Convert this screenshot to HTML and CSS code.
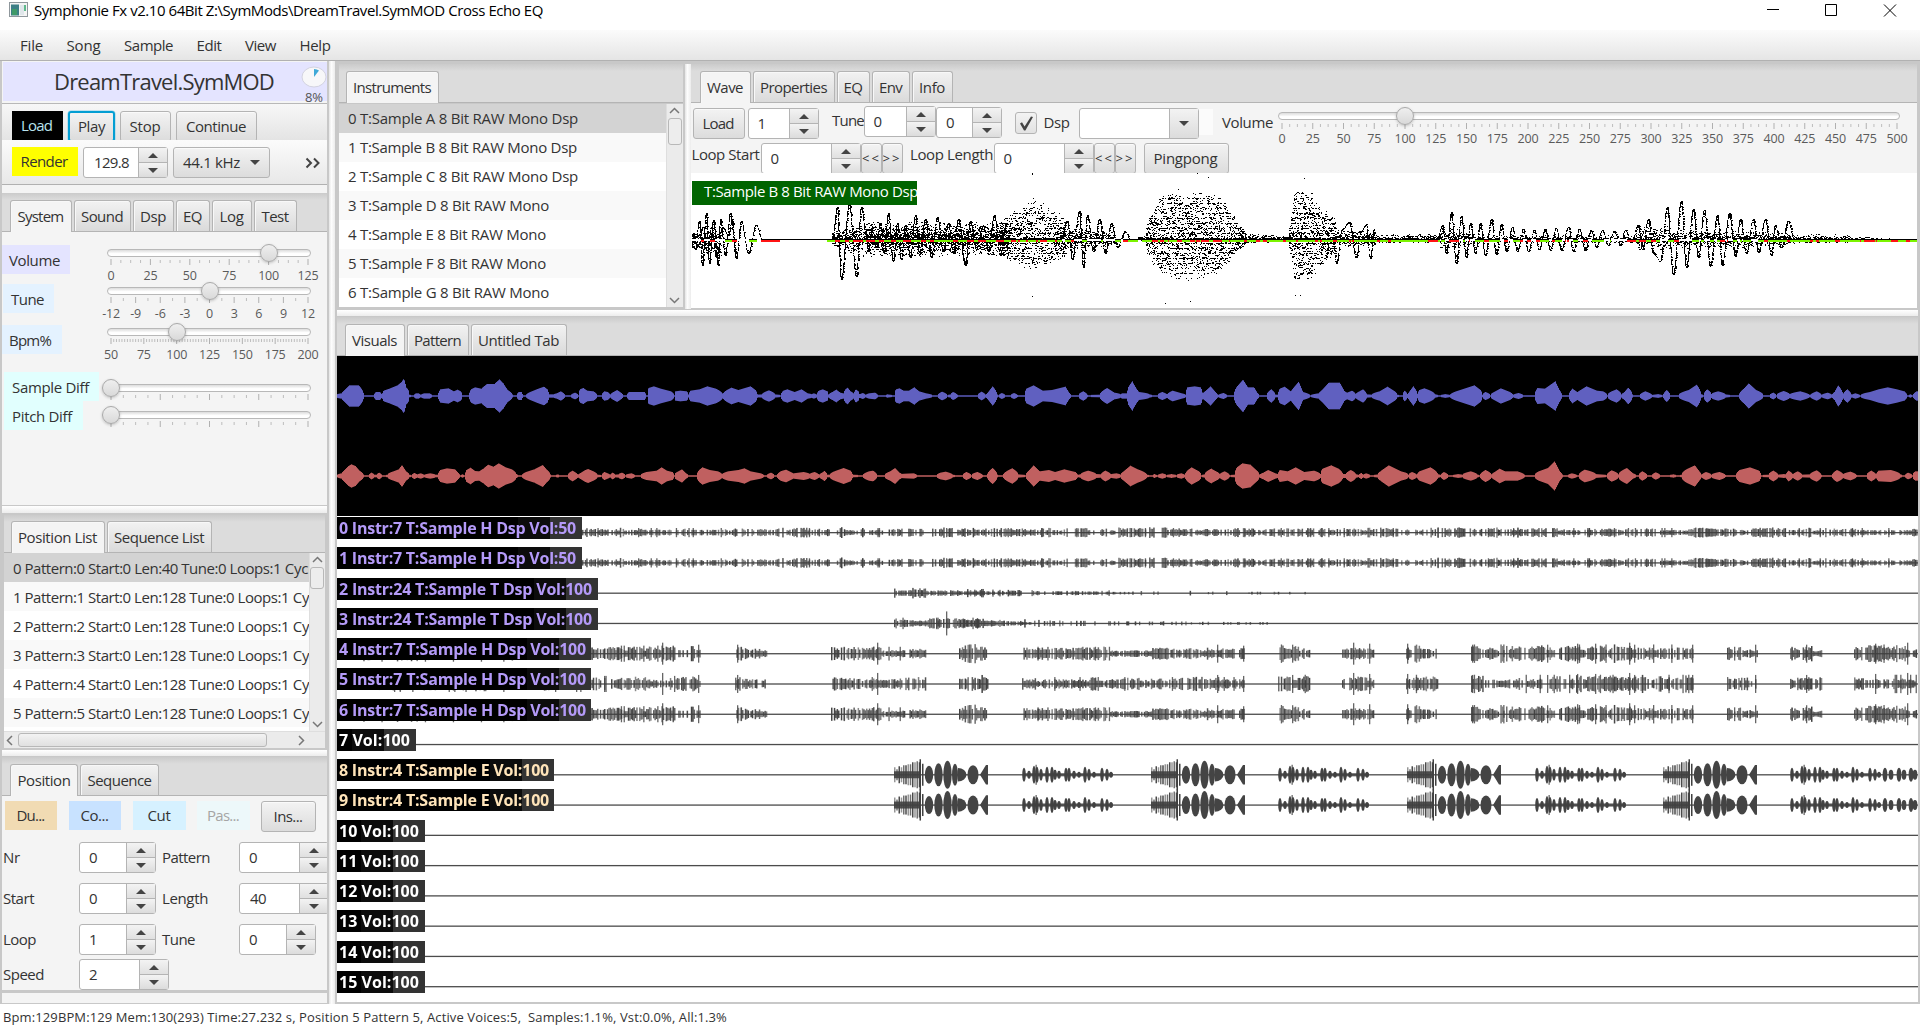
FILE: index.html
```html
<!DOCTYPE html>
<html lang="en">
<head>
<meta charset="utf-8">
<title>Symphonie Fx</title>
<link rel="stylesheet" href="styles.css">
</head>
<body>
<header class="titlebar">
  <svg class="app-icon" width="20" height="16" viewBox="0 0 20 16"><rect x=".5" y=".5" width="18" height="14" fill="#f4f4f4" stroke="#8f979c"/><rect x="2" y="2.500" width="8" height="11" fill="#3c7f86"/><rect x="3" y="7" width="5" height="6" fill="#3f9a68"/><rect x="11" y="3" width="4" height="10" fill="#dfe6ea"/><rect x="15" y="3" width="2" height="6" fill="#5fb98c"/></svg>
  <span data-w="509">Symphonie Fx v2.10 64Bit Z:\SymMods\DreamTravel.SymMOD Cross Echo EQ</span>
  <svg class="win-buttons" width="140" height="20" viewBox="0 0 140 20" fill="none" stroke="#000"><path d="M7 9.500h12M65.500 4.500h11v11h-11zM124 4.500l12 12M136 4.500l-12 12"/></svg>
</header>
<nav class="menubar">
  <span data-w="23">File</span><span data-w="34">Song</span><span data-w="49">Sample</span><span data-w="25">Edit</span><span data-w="31">View</span><span data-w="31">Help</span>
</nav>
<main class="work">
  <aside class="left">
    <div class="song"><div class="song-name"><span data-w="220">DreamTravel.SymMOD</span>
      <div class="load-meter"><svg width="26" height="22" viewBox="0 0 26 22"><ellipse cx="13" cy="11" rx="12" ry="10" fill="#f7f7f9" stroke="#d3d3e0"/><path d="M13 11V3q3 0 5 1.500z" fill="#3fa9d8"/></svg><span>8%</span></div></div></div>
    <div class="toolbar bar-top">
      <button class="btn black w51"><span data-w="31">Load</span></button><button class="btn focus w47"><span data-w="27">Play</span></button><button class="btn w51"><span data-w="31">Stop</span></button><button class="btn w81"><span data-w="60">Continue</span></button>
    </div>
    <div class="toolbar bar-bottom">
      <button class="btn yellow w66"><span data-w="47">Render</span></button>
      <div class="spinner w85"><b data-w="35">129.8</b><i></i></div>
      <button class="btn combo-btn"><span data-w="57">44.1 kHz</span><u class="down"></u></button>
      <svg class="more" width="16" height="12" viewBox="0 0 16 12" fill="none" stroke="#444" stroke-width="2"><path d="M1.500 1.500L6 6l-4.500 4.500M9 1.500L13.500 6 9 10.500"/></svg>
    </div>
    <div class="gap"></div>
    <section class="pane system">
      <div class="tabs"><div class="tab on w62"><span data-w="46">System</span></div><div class="tab w57"><span data-w="42">Sound</span></div><div class="tab w41"><span data-w="26">Dsp</span></div><div class="tab w34"><span data-w="19">EQ</span></div><div class="tab w40"><span data-w="24">Log</span></div><div class="tab w43"><span data-w="27">Test</span></div></div>
      <div class="params">
        <div class="param p1"><label class="lilac"><span data-w="51">Volume</span></label><div class="slider" data-labels="0,25,50,75,100,125" data-steps="20" data-value=".8"></div></div>
        <div class="param p2"><label class="sky"><span data-w="33">Tune</span></label><div class="slider" data-labels="-12,-9,-6,-3,0,3,6,9,12" data-steps="16" data-value=".5"></div></div>
        <div class="param p3"><label class="sky"><span data-w="42">Bpm%</span></label><div class="slider" data-labels="50,75,100,125,150,175,200" data-steps="72" data-value=".333"></div></div>
        <div class="param p4"><label class="aqua"><span data-w="77">Sample Diff</span></label><div class="slider" data-labels=",,,," data-steps="16" data-value="0"></div></div>
        <div class="param p5"><label class="aqua"><span data-w="60">Pitch Diff</span></label><div class="slider" data-labels=",,,," data-steps="16" data-value="0"></div></div>
      </div>
    </section>
    <div class="hsplit h10"></div>
    <section class="pane poslist">
      <div class="tabs"><div class="tab on w94"><span data-w="79">Position List</span></div><div class="tab w106"><span data-w="90">Sequence List</span></div></div>
      <div class="list-area">
        <div class="rows">
          <div class="sel"><span data-w="268">0 Pattern:0 Start:0 Len:40 Tune:0 Loops:1</span> Cycle</div>
          <div><span data-w="276">1 Pattern:1 Start:0 Len:128 Tune:0 Loops:1</span> Cycle</div>
          <div><span data-w="276">2 Pattern:2 Start:0 Len:128 Tune:0 Loops:1</span> Cycle</div>
          <div><span data-w="276">3 Pattern:3 Start:0 Len:128 Tune:0 Loops:1</span> Cycle</div>
          <div><span data-w="276">4 Pattern:4 Start:0 Len:128 Tune:0 Loops:1</span> Cycle</div>
          <div><span data-w="276">5 Pattern:5 Start:0 Len:128 Tune:0 Loops:1</span> Cycle</div>
          <div></div>
        </div>
        <div class="vscroll"><svg width="11" height="7" viewBox="0 0 11 7"><path d="M1 6l4.500-4.500L10 6"/></svg><em></em><svg width="11" height="7" viewBox="0 0 11 7"><path d="M1 1l4.500 4.500L10 1"/></svg></div>
      </div>
      <div class="hscroll"><svg width="7" height="11" viewBox="0 0 7 11"><path d="M6 1L1.500 5.500 6 10"/></svg><em></em><svg width="7" height="11" viewBox="0 0 7 11"><path d="M1 1l4.500 4.500L1 10"/></svg></div>
    </section>
    <div class="hsplit h7"></div>
    <section class="pane position">
      <div class="tabs"><div class="tab on w68"><span data-w="53">Position</span></div><div class="tab w79"><span data-w="64">Sequence</span></div></div>
      <div class="edit">
        <div class="edit-buttons"><button class="btn flat sand"><span data-w="28">Du...</span></button><button class="btn flat blue"><span data-w="28">Co...</span></button><button class="btn flat cyan"><span data-w="23">Cut</span></button><button class="btn flat pale"><span data-w="32">Pas...</span></button><button class="btn insert"><span data-w="29">Ins...</span></button></div>
        <div class="fields"><span><span data-w="17">Nr</span></span><div class="spinner w77"><b>0</b><i></i></div><span><span data-w="48">Pattern</span></span><div class="spinner w90"><b>0</b><i></i></div></div>
        <div class="fields"><span><span data-w="31">Start</span></span><div class="spinner w77"><b>0</b><i></i></div><span><span data-w="46">Length</span></span><div class="spinner w90"><b data-w="16">40</b><i></i></div></div>
        <div class="fields"><span><span data-w="33">Loop</span></span><div class="spinner w77"><b>1</b><i></i></div><span><span data-w="33">Tune</span></span><div class="spinner w77"><b>0</b><i></i></div></div>
        <div class="fields last"><span><span data-w="41">Speed</span></span><div class="spinner w90"><b>2</b><i></i></div></div>
      </div>
    </section>
    <div class="left-foot"></div>
  </aside>
  <div class="vsplit"></div>
  <div class="right">
    <div class="upper">
      <section class="pane instruments">
        <div class="tabs"><div class="tab on w93"><span data-w="78">Instruments</span></div></div>
        <div class="list-area">
          <div class="rows">
            <div class="sel"><span data-w="230">0 T:Sample A 8 Bit RAW Mono Dsp</span></div>
            <div><span data-w="229">1 T:Sample B 8 Bit RAW Mono Dsp</span></div>
            <div><span data-w="230">2 T:Sample C 8 Bit RAW Mono Dsp</span></div>
            <div><span data-w="201">3 T:Sample D 8 Bit RAW Mono</span></div>
            <div><span data-w="198">4 T:Sample E 8 Bit RAW Mono</span></div>
            <div><span data-w="198">5 T:Sample F 8 Bit RAW Mono</span></div>
            <div><span data-w="201">6 T:Sample G 8 Bit RAW Mono</span></div>
          </div>
          <div class="vscroll"><svg width="11" height="7" viewBox="0 0 11 7"><path d="M1 6l4.500-4.500L10 6"/></svg><em></em><svg width="11" height="7" viewBox="0 0 11 7"><path d="M1 1l4.500 4.500L10 1"/></svg></div>
        </div>
      </section>
      <div class="vsplit"></div>
      <section class="pane wave">
        <div class="tabs"><div class="tab on w51"><span data-w="36">Wave</span></div><div class="tab w82"><span data-w="67">Properties</span></div><div class="tab w33"><span data-w="19">EQ</span></div><div class="tab w38"><span data-w="23">Env</span></div><div class="tab w41"><span data-w="26">Info</span></div></div>
        <div class="wave-tools">
          <div class="tool-row one">
            <button class="btn w52"><span data-w="31">Load</span></button>
            <div class="spinner instr"><b>1</b><i></i></div>
            <span class="cap tune"><span data-w="32">Tune</span></span>
            <div class="spinner tune1"><b>0</b><i></i></div>
            <div class="spinner tune2"><b>0</b><i></i></div>
            <div class="check"><svg width="15" height="15" viewBox="0 0 15 15"><path d="M1 7.500l2-1.200 2.600 4.200L12 .5l2 .6-7.600 13.400H5z" fill="#444"/></svg></div>
            <span class="cap dsp"><span data-w="26">Dsp</span></span>
            <div class="combo"><i><u class="down"></u></i></div><div class="patch"></div>
            <span class="cap vol"><span data-w="51">Volume</span></span>
            <div class="slider wide" data-labels="0,25,50,75,100,125,150,175,200,225,250,275,300,325,350,375,400,425,450,475,500" data-steps="80" data-value=".2"></div>
          </div>
          <div class="tool-row two">
            <span class="cap start"><span data-w="68">Loop Start</span></span>
            <div class="spinner w100"><b>0</b><i></i></div>
            <button class="btn nudge">&lt;&lt;</button><button class="btn nudge">&gt;&gt;</button>
            <span class="cap len"><span data-w="83">Loop Length</span></span>
            <div class="spinner w100"><b>0</b><i></i></div>
            <button class="btn nudge">&lt;&lt;</button><button class="btn nudge">&gt;&gt;</button>
            <button class="btn pingpong"><span data-w="64">Pingpong</span></button>
          </div>
        </div>
        <div class="wave-view"><canvas id="sample" width="1226" height="135"></canvas><div class="wave-name"><span data-w="214">T:Sample B 8 Bit RAW Mono Dsp</span></div></div>
      </section>
    </div>
    <div class="hsplit h7 main-split"></div>
    <section class="pane visuals">
      <div class="tabs"><div class="tab on w60"><span data-w="45">Visuals</span></div><div class="tab w62"><span data-w="47">Pattern</span></div><div class="tab w96"><span data-w="81">Untitled Tab</span></div></div>
      <canvas id="scope" width="1581" height="160"></canvas>
      <div class="channels"><canvas id="tracks" width="1581" height="486"></canvas>
        <div class="names">
          <div class="dsp-ch n245"><span data-w="237">0 Instr:7 T:Sample H Dsp Vol:50</span></div>
          <div class="dsp-ch n245"><span data-w="237">1 Instr:7 T:Sample H Dsp Vol:50</span></div>
          <div class="dsp-ch n261"><span data-w="253">2 Instr:24 T:Sample T Dsp Vol:100</span></div>
          <div class="dsp-ch n261"><span data-w="253">3 Instr:24 T:Sample T Dsp Vol:100</span></div>
          <div class="dsp-ch n254"><span data-w="247">4 Instr:7 T:Sample H Dsp Vol:100</span></div>
          <div class="dsp-ch n254"><span data-w="247">5 Instr:7 T:Sample H Dsp Vol:100</span></div>
          <div class="dsp-ch n254"><span data-w="247">6 Instr:7 T:Sample H Dsp Vol:100</span></div>
          <div class="n79"><span data-w="71">7 Vol:100</span></div>
          <div class="dry-ch n217"><span data-w="210">8 Instr:4 T:Sample E Vol:100</span></div>
          <div class="dry-ch n217"><span data-w="210">9 Instr:4 T:Sample E Vol:100</span></div>
          <div class="n88"><span data-w="80">10 Vol:100</span></div>
          <div class="n88"><span data-w="80">11 Vol:100</span></div>
          <div class="n88"><span data-w="80">12 Vol:100</span></div>
          <div class="n88"><span data-w="80">13 Vol:100</span></div>
          <div class="n88"><span data-w="80">14 Vol:100</span></div>
          <div class="n88"><span data-w="80">15 Vol:100</span></div>
        </div>
      </div>
    </section>
  </div>
</main>
<footer class="status"><span data-w="724">Bpm:129BPM:129 Mem:130(293) Time:27.232 s, Position 5 Pattern 5, Active Voices:5,&nbsp; Samples:1.1%, Vst:0.0%, All:1.3%</span></footer>
<script src="app.js"></script>
</body>
</html>
```
FILE: styles.css
```css
* { box-sizing: border-box; }
body { margin: 0; width: 1920px; height: 1030px; overflow: hidden; display: flex; flex-direction: column; background: #fff; color: #333; font: 15px/20px "Open Sans", "Noto Sans", sans-serif; }
span, label, button, b { white-space: nowrap; }
[data-w] { display: inline-block; }
canvas { display: block; }

.titlebar { height: 30px; flex: none; display: flex; align-items: flex-start; padding-left: 9px; color: #000; }
.app-icon { margin: 2px 5px 0 0; }
.win-buttons { margin: 0 20px 0 auto; }
.menubar { height: 31px; flex: none; display: flex; align-items: center; gap: 23.500px; padding-left: 20px; border-bottom: 1px solid #b1b1b1; background: linear-gradient(#fbfbfb, #e5e5e5); }
.status { height: 26px; padding: 3px 0 0 3px; font-size: 13px; }

.work { height: 943px; display: flex; background: #c8c8c8; }
.left { width: 329px; flex: none; padding: 0 2px; overflow: hidden; }
.vsplit { width: 6px; flex: none; background: linear-gradient(90deg, #e4e4e4, #fdfdfd 40%, #ececec); }
.hsplit { background: linear-gradient(#fff, #ececec); border: solid #c8c8c8; }
.h10 { height: 10px; border-width: 1px 0 2px; }
.h7 { height: 7px; border-width: 0 0 1px; }
.gap { height: 8px; background: #f4f4f4; }

.song { height: 42px; padding: 1px 0 2px 1px; background: #f4f4f4; }
.song-name { height: 39px; position: relative; background: #e4e4ff; font-size: 22px; line-height: 38px; padding-left: 51px; }
.load-meter { position: absolute; right: 0; top: 4px; width: 26px; font-size: 13px; line-height: 16px; color: #555; text-align: center; }
.load-meter svg { display: block; }
.load-meter span { display: block; margin-top: 1px; }
.toolbar { display: flex; align-items: flex-start; padding: 7px 10px 0; gap: 5px; overflow: hidden; }
.bar-top { height: 37px; border-top: 1px solid #b8b8b8; background: linear-gradient(#f7f7f7, #e4e4e4); }
.bar-bottom { height: 45px; padding-right: 6px; border-bottom: 1px solid #b1b1b1; background: linear-gradient(#fbfbfb, #e8e8e8); }
.more { margin: 10px 0 0 auto; }

.btn { height: 31px; flex: none; padding: 0 1px 1px 0; border: 1px solid #b4b4b4; border-radius: 3px; background: linear-gradient(#f3f3f3, #dcdcdc); box-shadow: inset 0 1px #fafafa; color: #333; font: inherit; line-height: 20px; display: flex; justify-content: center; align-items: center; }
.btn.black, .btn.yellow, .btn.flat { border: 0; border-radius: 0; box-shadow: none; height: 29px; }
.btn.black { background: #000; color: #b9e3ee; padding-right: 2px; }
.btn.yellow { background: #ff0; padding-right: 2px; }
.btn.focus { border: 2px solid #039ed3; box-shadow: 0 0 0 .5px #8fd0e8; padding-right: 0; }
.combo-btn { width: 97px; justify-content: flex-start; padding-left: 9px; gap: 10px; }
.down { width: 0; height: 0; border: solid transparent; border-width: 5px 5px 0; border-top-color: #444; }

.spinner { height: 31px; flex: none; display: flex; border: 1px solid #b4b4b4; border-radius: 3px; background: #fff; }
.spinner b { flex: 1; font-weight: 400; line-height: 28px; padding-left: 9px; }
.spinner b[data-w] { padding-left: 10px; }
.spinner i { width: 29px; border-left: 1px solid #b4b4b4; position: relative; background: linear-gradient(#b4b4b4, #b4b4b4) 0 14px / 100% 1px no-repeat, linear-gradient(#f3f3f3, #e0e0e0 14px, #f3f3f3 15px, #dcdcdc); }
.spinner i::before, .spinner i::after { content: ""; position: absolute; left: 9px; border: solid transparent; }
.spinner i::before { top: 5px; border-width: 0 5px 5px; border-bottom-color: #444; }
.spinner i::after { top: 20px; border-width: 5px 5px 0; border-top-color: #444; }

.tabs { height: 39px; display: flex; align-items: flex-end; gap: 2px; padding-left: 7.500px; border-bottom: 1px solid #b4b4b4; background: linear-gradient(#cbcbcb, #dcdcdc 7px); }
.tab { height: 31px; flex: none; border: 1px solid #b4b4b4; border-bottom: 0; border-radius: 3px 3px 0 0; background: linear-gradient(#f2f2f2, #dadada); box-shadow: inset 1px 1px #f8f8f8; display: flex; justify-content: center; align-items: center; padding-bottom: 1px; }
.tab.on { height: 32px; margin-bottom: -1px; padding-bottom: 2px; background: #f4f4f4; }
.upper .tab { padding-bottom: 0; }
.upper .tab.on { padding-bottom: 1px; }
.poslist .tabs, .instruments .tabs, .wave .tabs { height: 38px; }
.upper .tabs { height: 39px; }
.wave .tabs { padding-left: 8.500px; }
.visuals .tabs { padding-left: 7.500px; }

.params { height: 273px; padding-top: 12px; background: #f4f4f4; }
.param { display: flex; align-items: flex-start; position: relative; }
.param label { height: 29px; margin-top: 1px; line-height: 30px; }
.param .slider { width: 204px; margin-left: auto; margin-right: 16px; }
.p1 { height: 39px; } .p1 label { width: 68px; padding-left: 7px; }
.p2 { height: 41px; } .p2 label { width: 51px; margin-left: 1px; padding-left: 8px; } .p2 .slider, .p3 .slider { margin-top: -1px; }
.p3 { height: 47px; } .p3 label { width: 60px; padding-left: 7px; }
.p4 { height: 29px; } .p4 label { width: 95px; margin-left: 2px; padding-left: 8px; } .p4 .slider { margin-top: 8px; }
.p5 { height: 30px; } .p5 label { width: 79px; margin-left: 2px; padding-left: 8px; } .p5 .slider { margin-top: 6px; }
.lilac { background: #e4e4ff; } .sky { background: #e4f2ff; } .aqua { background: #e1fffe; }

.slider { height: 36px; position: relative; padding-top: 5px; }
.slider .track { height: 8px; border: 1px solid #b8b8b8; border-radius: 4px; background: linear-gradient(#dcdcdc, #fff 60%); }
.slider .thumb { position: absolute; top: 0; width: 18px; height: 18px; margin-left: -9px; border: 1px solid #a9a9a9; border-radius: 50%; background: linear-gradient(#efefef, #d9d9d9); box-shadow: 0 1px 3px rgba(0, 0, 0, .22); }
.slider .rail { position: absolute; left: 4px; right: 3px; top: 0; }
.slider svg { display: block; width: 100%; height: 7px; margin-top: 2px; overflow: visible; }
.slider .ticks { padding: 0 3px 0 4px; }
.slider .nums { display: flex; justify-content: space-between; font-size: 12.500px; line-height: 16px; margin-top: 2px; letter-spacing: -.2px; color: #5a5a5a; }
.slider .nums span { width: 0; display: flex; justify-content: center; }

.list-area { display: flex; background: #fff; overflow: hidden; }
.rows { flex: 1; min-width: 0; overflow: hidden; }
.rows div { height: 29px; line-height: 30px; padding-left: 9px; white-space: nowrap; overflow: hidden; letter-spacing: -.2px; }
.rows div:nth-child(even) { background: #f9f9f9; }
.rows .sel { background: #d3d3d3; }
.instruments .rows div { line-height: 29px; }
.vscroll { width: 17px; background: #ebebeb; border-left: 1px solid #dedede; display: flex; flex-direction: column; align-items: center; padding: 3px 1px 3px 0; }
.vscroll svg:last-child { margin-top: auto; }
.vscroll svg, .hscroll svg { flex: none; fill: none; stroke: #777; stroke-width: 1.500; }
.vscroll em { width: 14px; height: 27px; margin-top: 4px; flex: none; border: 1px solid #b8b8b8; border-radius: 3px; background: #ededed; }
.poslist { padding: 0 2px 2px; height: 235px; }
.poslist .list-area { height: 178px; }
.poslist .vscroll em { height: 22px; }
.poslist .vscroll { width: 16px; }
.hscroll { height: 17px; border-top: 1px solid #dedede; background: #ebebeb; display: flex; align-items: center; padding: 0 20px 0 2px; }
.hscroll em { width: 249px; height: 14px; margin-left: 5px; border: 1px solid #b8b8b8; border-radius: 3px; background: linear-gradient(#f3f3f3, #e0e0e0); }
.hscroll svg:last-child { margin-left: auto; }

.position { height: 235px; overflow: hidden; }
.position .tabs { padding-left: 8px; }
.poslist .tabs { padding-left: 6.500px; }
.edit { height: 194px; overflow: hidden; background: #f4f4f4; padding: 5px 0 0 1px; }
.edit-buttons { display: flex; gap: 12px; padding-left: 2px; height: 41px; }
.flat { width: 53px; } .flat.sand { width: 52px; background: #f1dbb3; } .flat.blue { width: 52px; background: #c8e2ff; } .flat.cyan { background: #d6f1ff; } .flat.pale { background: #edf8fa; color: #a5a5a5; margin-left: -1px; }
.insert { width: 55px; margin-left: -1px; }
.fields { display: grid; grid-template-columns: 76px 83px 77px 90px; height: 41px; line-height: 30px; }
.fields.last { margin-top: -6px; }
.left-foot { height: 10px; margin-top: 1px; background: #f4f4f4; }

.right { flex: 1; min-width: 0; padding: 3px 2px 0; }
.upper { height: 245px; display: flex; }
.instruments { width: 348px; flex: none; padding: 0 2px; }
.instruments .tabs { margin-bottom: 1px; padding-left: 6.500px; }
.instruments .list-area { height: 203px; }
.main-split { margin-top: 1px; }
.wave { width: 1226px; flex: none; height: 244px; background: #f4f4f4; }
.wave-tools { height: 70px; }
.tool-row { display: flex; align-items: flex-start; }
.one { height: 40px; padding: 5px 0 0 1.500px; }
.one .instr { width: 71px; margin-left: 3px; }
.cap { flex: none; }
.cap.tune { margin: 2px 0 0 13.500px; width: 31.500px; }
.tune1 { width: 72px; margin-top: -2px; } .tune2 { width: 66px; margin: -1px 0 0 .5px; }
.check { width: 22px; height: 22px; margin: 4px 0 0 13px; flex: none; border: 1px solid #b4b4b4; border-radius: 3px; background: linear-gradient(#f3f3f3, #e2e2e2); display: flex; align-items: center; justify-content: center; }
.cap.dsp { margin: 4px 9.500px 0 6.500px; width: 26px; }
.combo { width: 120px; height: 31px; flex: none; border: 1px solid #b4b4b4; border-radius: 3px; background: #fff; display: flex; justify-content: flex-end; }
.combo i { width: 29px; border-left: 1px solid #b4b4b4; background: linear-gradient(#f3f3f3, #dcdcdc); display: flex; align-items: center; justify-content: center; }
.patch { width: 14px; height: 26px; margin-top: 1px; background: #fbfbfb; }
.cap.vol { margin: 4px 4px 0 9px; width: 52px; }
.wide { width: 622px; margin-top: -1px; flex: none; }
.wide svg { margin-top: 3px; }
.wide .nums { margin-top: 1px; }
.two { height: 30px; padding-left: .5px; }
.cap.start { width: 69px; } .cap.len { width: 83.500px; margin-left: 8px; }
.two .btn, .two .spinner { margin-top: -1px; }
.two .cap { margin-top: 1px; }
.nudge { width: 21px; padding-left: 1px; margin-right: -.5px; font-size: 13px; letter-spacing: 2px; overflow: hidden; }
.two .nudge, .two .spinner, .two .pingpong { margin-top: 0; }
.two .spinner { margin-right: .5px; }
.pingpong { width: 85px; margin-left: 8.500px; }
.wave-view { height: 135px; position: relative; background: #fff; }
.wave-name { position: absolute; left: 1px; top: 8px; width: 225px; height: 24px; padding-left: 12px; overflow: hidden; background: #006400; color: #fff; line-height: 21px; }

#scope { background: #000; }
.channels { height: 486px; position: relative; background: #fff; }
.names { position: absolute; left: 0; top: 1px; display: grid; grid-auto-rows: 30.270px; color: #fff; font-weight: 700; font-size: 16px; }
.names div { height: 22px; padding-left: 2px; line-height: 23px; background: linear-gradient(90deg, #000, #000 calc(100% - 64px), #0c0c0c calc(100% - 64px), #0c0c0c calc(100% - 32px), #333 calc(100% - 32px)); }
.names .dsp-ch { color: #b49af8; } .names .dry-ch { color: #ffe4b9; }
.n245 { width: 245px; } .n261 { width: 261px; } .n254 { width: 254px; } .n217 { width: 217px; } .n79 { width: 79px; } .n88 { width: 88px; }

.w33 { width: 33px; } .w34 { width: 34px; } .w38 { width: 38px; } .w40 { width: 40px; } .w41 { width: 41px; } .w43 { width: 43px; } .w47 { width: 47px; } .w51 { width: 51px; } .w52 { width: 52px; } .w57 { width: 57px; } .w60 { width: 60px; } .w62 { width: 62px; } .w66 { width: 66px; } .w68 { width: 68px; } .w77 { width: 77px; } .w79 { width: 79px; } .w81 { width: 81px; } .w82 { width: 82px; } .w85 { width: 85px; } .w90 { width: 90px; } .w93 { width: 93px; } .w94 { width: 94px; } .w96 { width: 96px; } .w100 { width: 100px; } .w106 { width: 105px; }
```
FILE: app.js
```js
// Track each caption so that it takes its set width.
document.querySelectorAll('[data-w]').forEach(function (el) {
  var r = document.createRange();
  r.selectNodeContents(el);
  el.style.letterSpacing = '0px';
  var natural = r.getBoundingClientRect().width;
  el.style.letterSpacing = ((+el.dataset.w - natural) / el.textContent.length).toFixed(3) + 'px';
});

// Sliders: track, thumb, tick marks and numbers.
document.querySelectorAll('.slider').forEach(function (el) {
  var labels = el.dataset.labels.split(','), total = +el.dataset.steps, per = total / (labels.length - 1);
  var svg = '<svg>';
  for (var i = 0; i <= total; i++) {
    var major = i % per === 0, x = (i / total * 100) + '%';
    svg += '<line x1="' + x + '" x2="' + x + '" y1="' + (major ? 0 : 1) + '" y2="' + (major ? 6 : 4) + '" stroke="' + (major ? '#b0b0b0' : '#bdbdbd') + '"/>';
  }
  el.innerHTML = '<div class="track"></div><div class="ticks">' + svg + '</svg><div class="nums">' +
    labels.map(function (t) { return '<span>' + t + '</span>'; }).join('') +
    '</div></div><div class="rail"><div class="thumb" style="left:' + (el.dataset.value * 100) + '%"></div></div>';
});

var seed = 7;
function rnd() { seed = (seed * 16807) % 2147483647; return seed / 2147483647; }

// Output scope: [x, half height] pairs, in two stretches with their own scale.
var blueA = [17,5,27,8,47,32,70,32,82,6,84,2,107,2,112,12,122,12,127,2,131,16,145,22,165,32,175,42,179,50,183,46,186,26,191,20,194,4,205,2,210,8,216,8,222,3,230,8,243,8,250,2,264,2,270,20,290,23,303,14,312,19,320,14,324,3,340,2,345,20,355,26,370,22,384,36,402,36,415,50,424,38,435,18,447,3,457,3,462,12,468,12,472,2,480,3,490,12,510,22,524,28,532,20,536,5,548,5,555,8,565,14,575,3,590,3,600,10,608,3,612,20,620,24,630,16,645,14,654,3,665,3,672,14,680,12,686,3,694,12,703,18,715,8,717,3,727,3,732,12,770,12,774,3,778,3,780,24,793,29,810,22,835,14,843,3,846,14,858,16,874,14,878,3,883,16,905,20,924,29,945,22,962,5,972,18,983,25,1000,18,1030,29,1042,18,1047,4,1058,5,1075,17,1090,5,1104,3,1110,16,1120,20,1138,12,1155,20,1170,8,1180,5,1185,8,1192,4,1197,16,1207,20,1218,14,1221,3,1230,12,1240,19,1250,10,1257,8,1262,20,1268,25,1275,14,1283,6,1288,20,1294,14,1297,4,1305,9,1312,3,1320,8,1335,10,1342,2,1358,2,1365,5,1376,3,1382,3,1386,20,1395,23,1405,16,1418,16,1431,26,1443,14,1460,8,1475,3,1488,2,1499,13,1512,3,1520,5,1526,12,1535,5,1541,2];
var redA = [17,3,27,8,45,30,52,35,62,30,72,16,82,3,95,3,101,10,108,4,114,4,120,10,127,2,140,4,155,14,168,20,176,33,186,14,194,4,200,3,206,9,213,4,222,8,230,3,245,8,258,4,264,4,270,18,286,23,306,20,315,8,318,2,324,5,330,2,334,18,344,25,355,15,365,14,375,22,387,34,400,28,413,38,430,26,445,20,456,6,460,3,470,3,480,12,500,20,521,33,530,20,540,3,552,3,558,5,564,2,582,3,588,12,594,16,602,10,607,3,612,8,625,18,632,21,645,14,655,4,665,3,672,12,680,8,686,3,692,10,698,4,706,5,715,10,723,3,738,8,746,3,760,3,775,12,800,16,812,26,825,16,838,12,843,3,847,10,862,20,872,8,877,3,898,3,904,18,912,26,930,18,950,14,960,5,975,14,1000,18,1015,23,1030,14,1055,8,1062,3,1070,3,1080,10,1088,3,1095,3,1105,15,1117,19,1135,8,1160,12,1175,6,1187,12,1198,3,1205,10,1211,15,1218,4,1224,4,1235,14,1258,24,1275,16,1280,4,1298,3,1305,3,1320,14,1330,16,1340,3,1358,3,1372,14,1384,24,1395,10,1400,6,1430,8,1438,2,1485,2,1495,10,1508,13,1525,4,1540,2];
var blueB = [0,2,28,2,35,13,42,2,45,10,53,29,60,6,63,2,68,9,74,2,82,2,88,9,94,2,105,2,108,22,120,32,135,16,150,18,172,28,178,10,181,2,193,3,201,14,208,3,228,4,240,24,252,10,262,5,265,8,272,8,275,28,281,44,288,22,292,12,308,6,315,2,322,3,330,12,338,4,347,16,362,8,368,4,371,26,383,29,393,26,396,6,400,14,409,29,418,10,421,2,430,9,436,2,447,3,451,26,462,49,470,26,480,26,486,8,489,2,500,2,508,20,515,4,519,4,522,22,530,28,540,14,545,26,553,43,560,12,572,2,585,8,592,20,602,40,620,40,628,14,632,10,640,16,646,5,652,14,658,20,664,5,672,4,685,14,698,28,710,14,714,4,722,2,726,16,731,3,734,14,740,29,747,5,750,18,758,23,775,6,782,2,792,6,800,3,810,14,840,32,850,18,853,4,858,12,866,3,872,12,883,23,898,12,903,3,912,9,920,2,938,3,943,24,955,22,972,44,980,14,983,3,994,3,1000,22,1008,12,1023,29,1040,16,1050,14,1057,3,1064,14,1072,20,1080,5,1084,10,1091,25,1098,5,1100,2,1110,3,1119,14,1130,3,1140,6,1148,2,1154,18,1160,2,1173,3,1190,18,1203,34,1210,6,1214,3,1220,20,1227,6,1238,14,1250,5,1262,2,1272,3,1280,22,1288,38,1300,18,1312,3,1322,3,1328,10,1333,3,1345,15,1355,5,1372,14,1388,2,1399,14,1407,3,1417,10,1424,3,1428,12,1434,32,1442,4,1449,20,1456,3,1462,8,1470,2,1478,9,1486,12,1500,20,1515,26,1530,20,1542,14,1547,2,1552,5,1556,2,1562,14,1566,14];
var redB = [0,2,4,3,10,12,18,3,28,12,37,2,44,3,53,24,61,3,70,3,85,23,95,5,107,3,112,16,120,32,130,14,145,18,155,12,170,20,188,12,192,3,197,6,209,16,222,6,230,5,237,16,246,5,255,8,262,4,267,14,278,31,290,20,305,4,313,2,317,6,322,2,330,8,337,3,345,6,353,3,361,8,367,3,372,18,378,26,390,14,394,3,399,5,410,22,420,12,424,5,432,14,440,3,448,4,452,26,461,38,474,34,486,14,489,3,495,10,503,18,515,8,519,5,522,18,535,14,548,26,562,12,578,16,588,6,592,22,606,32,618,22,625,6,630,6,638,18,646,6,651,3,655,9,658,3,663,8,670,2,682,5,686,14,700,32,720,14,728,10,732,4,738,12,746,3,750,14,768,26,780,6,785,3,790,12,797,3,805,3,813,6,820,4,834,14,845,4,849,3,858,18,868,4,873,12,881,22,890,14,910,14,922,3,938,3,945,14,960,24,971,44,980,12,984,3,993,3,999,8,1007,3,1010,3,1020,19,1038,6,1056,3,1064,17,1075,5,1089,24,1099,8,1104,3,1108,3,1114,14,1122,3,1130,3,1136,11,1143,3,1158,3,1165,5,1172,2,1178,4,1186,20,1200,32,1209,10,1211,3,1218,12,1227,4,1240,12,1250,3,1267,3,1273,18,1290,26,1305,16,1308,3,1320,4,1328,16,1336,4,1345,6,1349,5,1353,16,1360,4,1368,14,1375,4,1388,5,1399,17,1407,2,1424,3,1432,18,1442,5,1454,13,1464,3,1480,3,1488,16,1496,4,1500,16,1520,18,1535,6,1540,2,1543,2,1548,10,1555,3,1560,14,1566,14];
function scope(ctx, a, b, mid, color, line) {
  var pts = [], i, x, k = 0;
  for (i = 0; i < a.length; i += 2) pts.push([a[i] / 2.45 - 7, a[i + 1] / 3]);
  for (i = 0; i < b.length; i += 2) pts.push([b[i] / 1.6333 + 623, b[i + 1] / 3]);
  ctx.fillStyle = line;
  ctx.fillRect(0, mid - 1, 1581, 2);
  ctx.fillStyle = color;
  for (x = 0; x < 1581; x++) {
    while (k < pts.length - 2 && pts[k + 1][0] <= x) k++;
    var p = pts[k], q = pts[k + 1], t = Math.min(1, Math.max(0, (x + .3 - p[0]) / (q[0] - p[0])));
    if (p[1] < 2.2) t = Math.pow(t, .6);
    if (q[1] < 2.2) t = 1 - Math.pow(1 - t, .6);
    var h = p[1] + (q[1] - p[1]) * t;
    if (h > 1.1) ctx.fillRect(x, mid - h, 1, h * 2);
  }
}
var sc = document.getElementById('scope').getContext('2d');
scope(sc, blueA, blueB, 40, '#6060c0', '#44448c');
scope(sc, redA, redB, 120, '#c06060', '#904848');

// Per-channel tracks.
var tr = document.getElementById('tracks').getContext('2d');
function mid(ch) { return 16.6 + ch * 30.27; }
function bar(x, y, h, w, a) { tr.fillStyle = 'rgba(64,64,64,' + (a || .8) + ')'; tr.fillRect(x - 337, y - h, w || 1.3, h * 2); }
function burst(ch, x0, x1, amp, fade, density) {
  var y = mid(ch), x = x0, group = 1;
  while (x < x1) {
    var k = fade ? 1 - (x - x0) / (x1 - x0) : 1;
    if (rnd() < .14) group = .4 + rnd() * .8;
    if (rnd() < (density || .8)) bar(x, y, 1.2 + amp * (.3 + .6 * rnd()) * k * group, 1.5, .6 + rnd() * .4);
    if (rnd() < .04) bar(x, y, amp * 1.15 * k, 1.3, .8);
    x += 1.4;
  }
}
for (var c = 0; c < 16; c++) {
  tr.fillStyle = '#4c4c4c';
  tr.fillRect(0, mid(c) - .6, 1581, 1.3);
}
burst(0, 400, 1917, 4, false, .68);
seed = 7;
burst(1, 400, 1917, 4, false, .68);
burst(2, 894, 1010, 5.5, true); burst(2, 960, 1130, 4, true, .5); burst(2, 1100, 1305, 2, true, .12);
burst(3, 894, 980, 5, false); burst(3, 960, 1030, 6, true); burst(3, 1020, 1270, 3, true, .2);
bar(946, mid(3), 12);
[4, 5, 6].forEach(function (ch) {
  seed = 99 + ch % 2;
  [[345,700,7],[735,766,6],[831,926,6],[959,989,8],[1022,1244,6],[1278,1310,8],[1342,1374,7],[1406,1437,8],[1471,1693,8],[1727,1757,6],[1790,1822,6],[1854,1917,8]].forEach(function (s) { burst(ch, s[0], s[1], s[2]); });
  [[662,11],[698,9],[737,9],[877,11],[1217,9],[1243,8],[1292,9],[1353,11],[1369,10],[1407,10],[1472,9],[1547,9],[1577,10],[1595,10],[1629,11],[1634,9],[1692,9],[1755,9],[1806,9],[1875,10],[1907,11]].forEach(function (s) { bar(s[0], mid(ch), s[1]); });
});
function lens(cx, y, w, h) {
  tr.fillStyle = '#444';
  tr.beginPath();
  tr.ellipse(cx - 337, y, w, h, 0, 0, 7);
  tr.fill();
}
[8, 9].forEach(function (ch) {
  var y = mid(ch);
  [894, 1151, 1407, 1663].forEach(function (x) {
    bar(x, y, 3.500, 27, .9);
    [8,6,9,8,10,10,11,11,13,13,14,13].forEach(function (h, i) { bar(x + i * 2.25, y, h - .5, 1.5, .55 + (i % 3) * .2); });
    bar(x + 25.500, y, 15.500, 1.500, 1);
    bar(x + 28, y, 11, 1.500, 1);
    lens(x + 35, y, 4.200, 9); lens(x + 44.500, y, 4.200, 11.500); lens(x + 53.500, y, 4.200, 14); lens(x + 61, y, 3, 11);
    tr.fillStyle = '#444';
    tr.beginPath(); tr.ellipse(x + 64 - 337, y, 8.500, 6.800, 0, -1.570, 1.570); tr.fill();
    lens(x + 79, y, 5.500, 9.500);
    tr.beginPath(); tr.moveTo(x + 86 - 337, y); tr.lineTo(x + 92 - 337, y - 9.800); tr.lineTo(x + 94 - 337, y - 9.800); tr.lineTo(x + 94 - 337, y + 9.800); tr.lineTo(x + 92 - 337, y + 9.800); tr.fill();
  });
  [1022, 1278, 1535, 1790].forEach(function (x) {
    [2,7,7,4,12,9,15,8,19,6,25,8,30,8,33,5,37,4,44,7,47,7,52,4,57,3,63,8,67,6,72,3,80,7,85,6,89,3].forEach(function (v, i, a) { if (i % 2 === 0) lens(x + v, y, 1.8, a[i + 1]); });
    bar(x + 1, y, 1.600, 90);
    bar(x + 13.500, y, 10, 1.300);
  });
  [1885, 1891, 1899, 1904, 1911, 1915].forEach(function (x, i) { lens(x, y, 2.400, i % 2 ? 5 : 7); });
});

// Sample view: plotted points around the zero line.
var sm = document.getElementById('sample').getContext('2d'), Z = 66;
function dot(x, y, w) { sm.fillRect(Math.round(x - 691), Math.round(Z - y), w || 1, 1); }
function trace(pts) {
  for (var i = 0; i + 3 < pts.length; i += 2) {
    var x0 = pts[i], y0 = pts[i + 1], x1 = pts[i + 2], y1 = pts[i + 3];
    if (x1 - x0 > 12) continue;
    var n = Math.ceil(Math.max(Math.abs(y1 - y0), Math.abs(x1 - x0)) * 1.5);
    for (var k = 0; k < n; k++) {
      var t = k / n, s = (1 - Math.cos(t * Math.PI)) / 2;
      if (rnd() < .85) dot(x0 + (x1 - x0) * t, y0 + (y1 - y0) * s, rnd() < .3 ? 2 : 1);
    }
  }
}
function noise(x0, x1, u0, u1, d0, d1, per, flat) {
  for (var x = x0; x < x1; x++) {
    var k = (x - x0) / (x1 - x0), u = u0 + (u1 - u0) * k, d = d0 + (d1 - d0) * k;
    for (var i = 0; i < per; i++) {
      var s = flat ? Math.pow(rnd(), 1.25) * (.85 + rnd() * .25) : rnd() - rnd() * .6;
      if (s < 0) s = rnd() * .3;
      var y = rnd() < .55 ? s * u : -s * d;
      if (flat && rnd() < .3) y = Math.round(y / 5) * 5 + 1;
      dot(x, y, rnd() < .25 ? 2 : 1);
    }
  }
}
sm.fillStyle = '#000';
sm.fillRect(0, Z, 1226, 1);
trace([692,5,695,-10,699,18,702,-26,706,26,709,-24,713,19,718,-26,720,20,725,-16,730,26,736,-19,741,18,748,-14,756,14,762,0]);
trace([692,-8,693,6,697,-8,703,12,707,-14,711,12,716,-18,722,12,728,4,732,20,735,-10]);
noise(692, 722, 6, 12, 8, 18, 6);
trace([832,0,837,32,841,-40,849,35,856,-37,861,32,866,4,868,-12,872,12,876,-8,880,16,884,-14,888,26,893,-22,897,16,901,-20,905,14,910,-18,915,24,919,-16,925,20,931,-18,937,22,943,-12,948,16,953,-14,958,20,965,-26,970,18,976,-10,983,14,988,-12,994,24,1000,-16,1006,16]);
noise(832, 866, 8, 18, 6, 20, 9);
noise(866, 1010, 19, 17, 19, 16, 15);
noise(1000, 1034, 18, 38, 16, 30, 16, true);
noise(1034, 1066, 38, 18, 30, 16, 16, true);
trace([1060,0,1067,18,1072,-20,1079,28,1083,-28,1087,24,1093,-12,1099,20,1105,-14,1111,16,1117,-8,1125,8,1130,0]);
noise(1060, 1115, 14, 7, 12, 6, 8);
noise(1138, 1148, 3, 6, 0, 4, 6);
noise(1146, 1160, 14, 40, 14, 32, 17, true);
noise(1160, 1185, 42, 45, 33, 40, 22, true);
noise(1185, 1222, 45, 40, 40, 32, 22, true);
noise(1222, 1246, 38, 5, 28, 3, 15, true);
noise(1242, 1290, 7, 3, 5, 2, 5);
noise(1289, 1294, 12, 40, 8, 36, 18, true);
noise(1294, 1312, 47, 44, 44, 38, 24, true);
noise(1312, 1336, 42, 16, 34, 12, 19, true);
noise(1334, 1376, 12, 10, 9, 6, 8);
noise(1376, 1442, 6, 6, 4, 3, 5);
trace([1333,0,1336,-24,1342,10,1349,17,1356,-18,1361,8,1366,15,1370,-19,1374,10]);
trace([1437,0,1442,14,1446,-14,1451,27,1456,-24,1461,23,1466,-18,1470,16,1475,-14,1480,16,1485,-16,1491,20,1496,-15,1501,15,1506,-12,1512,12,1517,-12,1523,10,1528,-12,1534,9,1539,-10,1545,10,1550,-11,1556,11,1561,-11,1568,12,1573,-12,1579,10,1585,-11,1591,9,1596,-8,1602,9,1608,-6,1614,8,1620,-6,1625,9,1631,-3,1638,14,1642,-10,1648,20,1653,-14,1660,-22,1667,32,1673,-35,1681,38,1686,-28,1693,30,1698,-18,1704,29,1710,-27,1717,24,1722,-26,1729,26,1735,-17,1740,20,1746,-14,1753,20,1758,-13,1765,20,1771,-16,1775,14,1781,-8,1788,18,1794,0]);
noise(1440, 1475, 13, 8, 10, 6, 6);
noise(1475, 1640, 5, 4, 4, 3, 3);
noise(1636, 1670, 14, 14, 12, 12, 7);
noise(1670, 1790, 10, 8, 10, 8, 6);
noise(1786, 1850, 6, 5, 4, 4, 4);
noise(1850, 1890, 3, 1, 2, 0, 2);
dot(1032, 66); dot(1032, 65); dot(1197, 66); dot(1208, 62); dot(1304, 61); dot(1178, 50); dot(1032, -57); dot(1165, -64); dot(1190, -62); dot(1295, -56); dot(1300, -56);
for (var x = 0; x < 1226; ) {
  var w = 1 + Math.floor(rnd() * 5), quiet = (x > 88 && x < 132) || (x > 443 && x < 451), osc = x < 70 || (x > 370 && x < 440) || (x > 745 && x < 940) || (x > 960 && x < 1080);
  sm.fillStyle = x > 68 && x < 86 ? '#ff1414' : rnd() < .36 ? '#ff1414' : '#7cf400';
  if (!quiet) {
    if (!osc || rnd() < .6) sm.fillRect(x, Z + 1, w, 2);
    else { sm.fillStyle = '#fff'; sm.fillRect(x, Z, w, 2); }
  }
  x += w;
}
```
